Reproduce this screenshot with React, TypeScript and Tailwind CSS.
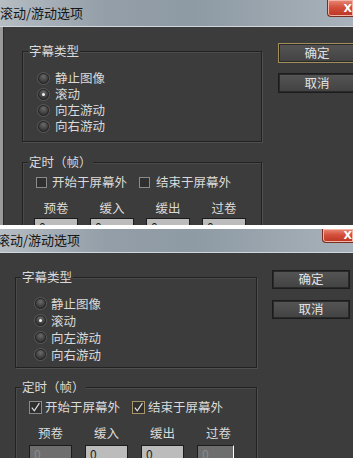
import React from "react";

const F = "font-['Noto_Sans_CJK_SC','Noto_Sans',sans-serif]";

function Radio({ checked }: { checked?: boolean }) {
  return (
    <span className="flex h-[11px] w-[11px] shrink-0 items-center justify-center rounded-full border border-[#262626] bg-[radial-gradient(circle_at_50%_30%,#6a6a6a,#353535_75%)] shadow-[0_0_0_1px_#585858]">
      {checked && <span className="h-[3px] w-[3px] rounded-full bg-[#f4f4f4]" />}
    </span>
  );
}

function Check({ checked, focus, big }: { checked?: boolean; focus?: boolean; big?: boolean }) {
  return (
    <span
      className={`flex shrink-0 items-center justify-center border ${
        focus ? "border-[#a8956a]" : "border-[#8a8a8a]"
      } bg-[#2f2f2f] ${big ? "h-[13px] w-[13px]" : "h-[11px] w-[11px]"}`}
    >
      {checked && (
        <svg width="11" height="11" viewBox="0 0 11 11">
          <path d="M1.8 5.6 L4.3 8.8 L9.4 1.2" fill="none" stroke="#e0e0e0" strokeWidth="1.2" />
        </svg>
      )}
    </span>
  );
}

function TitleBar({ h, shift, closeW, closeH }: { h: string; shift: string; closeW: string; closeH: string }) {
  return (
    <div
      className={`flex ${h} shrink-0 items-start justify-between border-b border-[#cfd6dc] bg-[linear-gradient(90deg,#b6bdc3_0%,#939ea8_30%,#8e9aa4_55%,#9ca7b0_80%,#a9b2ba_100%)]`}
    >
      <span className={`${shift} ${F} text-[13px] leading-[24px] text-[#151515]`}>滚动/游动选项</span>
      <span
        className={`${closeW} ${closeH} flex items-center justify-end rounded-bl-[4px] border border-r-0 border-t-0 border-[#7a2e22] bg-[linear-gradient(180deg,#e88a78_0%,#d4513c_45%,#b93422_100%)] pr-[1px] shadow-[inset_0_0_0_1px_#f3b3a6]`}
      >
        <span className="font-['DejaVu_Sans',sans-serif] text-[11px] font-bold leading-none text-white">X</span>
      </span>
    </div>
  );
}

function Group({ label, className, children }: { label: string; className: string; children: React.ReactNode }) {
  return (
    <div
      className={`flex shrink-0 flex-col border border-[#222222] shadow-[1px_1px_0_#4f4f4f,inset_1px_1px_0_#4a4a4a] ${className}`}
    >
      <span className={`-mt-[9px] ml-[5px] w-fit bg-[#3c3c3c] px-[1px] ${F} text-[12.5px] leading-[16px] text-[#dadada]`}>
        {label}
      </span>
      {children}
    </div>
  );
}

function Btn({ label, focus, cls }: { label: string; focus?: boolean; cls: string }) {
  return (
    <div
      className={`flex shrink-0 items-center justify-center border ${
        focus ? "border-[#a08d5a]" : "border-[#1c1c1c]"
      } bg-[linear-gradient(180deg,#555555,#424242)] shadow-[inset_0_0_0_1px_#2a2a2a] ${cls} ${F} text-[12.5px] text-[#e2e2e2]`}
    >
      {label}
    </div>
  );
}

function Box({ cls, disabled }: { cls: string; disabled?: boolean }) {
  return (
    <div
      className={`shrink-0 border border-[#1c1c1c] pl-[4px] ${F} text-[12px] leading-[16px] ${
        disabled ? "bg-[#6e6e6e] text-[#8c8c8c]" : "bg-[#bcbcbc] text-[#222]"
      } ${cls}`}
    >
      0
    </div>
  );
}

const radios = ["静止图像", "滚动", "向左游动", "向右游动"];
const labels = ["预卷", "缓入", "缓出", "过卷"];

function TopPanel() {
  return (
    <div className="flex h-[225px] w-[353px] shrink-0 flex-col overflow-hidden bg-[#3c3c3c]">
      <TitleBar h="h-[27px]" shift="ml-[0px] pt-[1px]" closeW="w-[26px]" closeH="h-[17px]" />
      <div className="flex min-h-0 flex-1">
        <div className="w-[3px] shrink-0 bg-[#9a9a9a]" />
        <div className="w-[1px] shrink-0 bg-[#2a2a2a]" />
        <div className="ml-[18px] flex w-[240px] shrink-0 flex-col">
          <Group label="字幕类型" className="mt-[24px] h-[91px]">
            <div className="mt-[11px] flex flex-col">
              {radios.map((r, i) => (
                <div key={r} className="flex h-[16px] items-center pl-[15px]">
                  <Radio checked={i === 1} />
                  <span className={`ml-[6px] ${F} text-[12.5px] leading-[16px] text-[#dadada]`}>{r}</span>
                </div>
              ))}
            </div>
          </Group>
          <Group label="定时（帧）" className="mt-[20px] h-[120px]">
            <div className="mt-[4px] flex h-[16px] items-center pl-[13px]">
              <Check />
              <span className={`ml-[5px] ${F} text-[12.5px] leading-[16px] text-[#dadada]`}>开始于屏幕外</span>
              <span className="ml-[12px]">
                <Check />
              </span>
              <span className={`ml-[6px] ${F} text-[12.5px] leading-[16px] text-[#dadada]`}>结束于屏幕外</span>
            </div>
            <div className="mt-[10px] flex gap-[12px] pl-[11px]">
              {labels.map((l) => (
                <div key={l} className="flex w-[44px] flex-col items-center">
                  <span className={`${F} text-[12.5px] leading-[16px] text-[#dadada]`}>{l}</span>
                  <Box cls="mt-[2px] h-[20px] w-[44px]" />
                </div>
              ))}
            </div>
          </Group>
        </div>
        <div className="ml-[16px] flex flex-1 flex-col">
          <Btn label="确定" focus cls="mt-[16px] h-[20px] w-[78px]" />
          <Btn label="取消" cls="mt-[10px] h-[20px] w-[78px]" />
        </div>
      </div>
    </div>
  );
}

function BottomPanel() {
  return (
    <div className="flex h-[229px] w-[353px] shrink-0 flex-col overflow-hidden bg-[#3c3c3c]">
      <TitleBar h="h-[24px]" shift="-ml-[3px] -mt-[1px]" closeW="w-[31px]" closeH="h-[14px]" />
      <div className="flex min-h-0 flex-1">
        <div className="ml-[15px] flex w-[242px] shrink-0 flex-col">
          <Group label="字幕类型" className="mt-[24px] h-[91px]">
            <div className="mt-[10px] flex flex-col">
              {radios.map((r, i) => (
                <div key={r} className="flex h-[17px] items-center pl-[19px]">
                  <Radio checked={i === 1} />
                  <span className={`ml-[5px] ${F} text-[12.5px] leading-[16px] text-[#dadada]`}>{r}</span>
                </div>
              ))}
            </div>
          </Group>
          <Group label="定时（帧）" className="mt-[19px] h-[110px]">
            <div className="mt-[4px] flex h-[16px] items-center pl-[13px]">
              <Check checked big />
              <span className={`ml-[3px] ${F} text-[12.5px] leading-[16px] text-[#dadada]`}>开始于屏幕外</span>
              <span className="ml-[12px]">
                <Check checked focus big />
              </span>
              <span className={`ml-[3px] ${F} text-[12.5px] leading-[16px] text-[#dadada]`}>结束于屏幕外</span>
            </div>
            <div className="mt-[10px] flex gap-[13px] pl-[13px]">
              {labels.map((l, i) => (
                <div key={l} className="flex w-[43px] flex-col items-center">
                  <span className={`${F} text-[12.5px] leading-[16px] text-[#dadada]`}>{l}</span>
                  <Box
                    disabled={i === 0 || i === 3}
                    cls={`mt-[4px] h-[20px] self-start ${i === 3 ? "w-[37px] border-r-white" : "w-[43px]"}`}
                  />
                </div>
              ))}
            </div>
          </Group>
        </div>
        <div className="ml-[15px] flex flex-1 flex-col">
          <Btn label="确定" cls="mt-[17px] h-[19px] w-[78px]" />
          <Btn label="取消" cls="mt-[11px] h-[19px] w-[78px]" />
        </div>
      </div>
    </div>
  );
}

export default function App() {
  return (
    <div className="flex h-[458px] w-[353px] flex-col overflow-hidden bg-white">
      <TopPanel />
      <div className="h-[4px] shrink-0 bg-white" />
      <BottomPanel />
    </div>
  );
}
